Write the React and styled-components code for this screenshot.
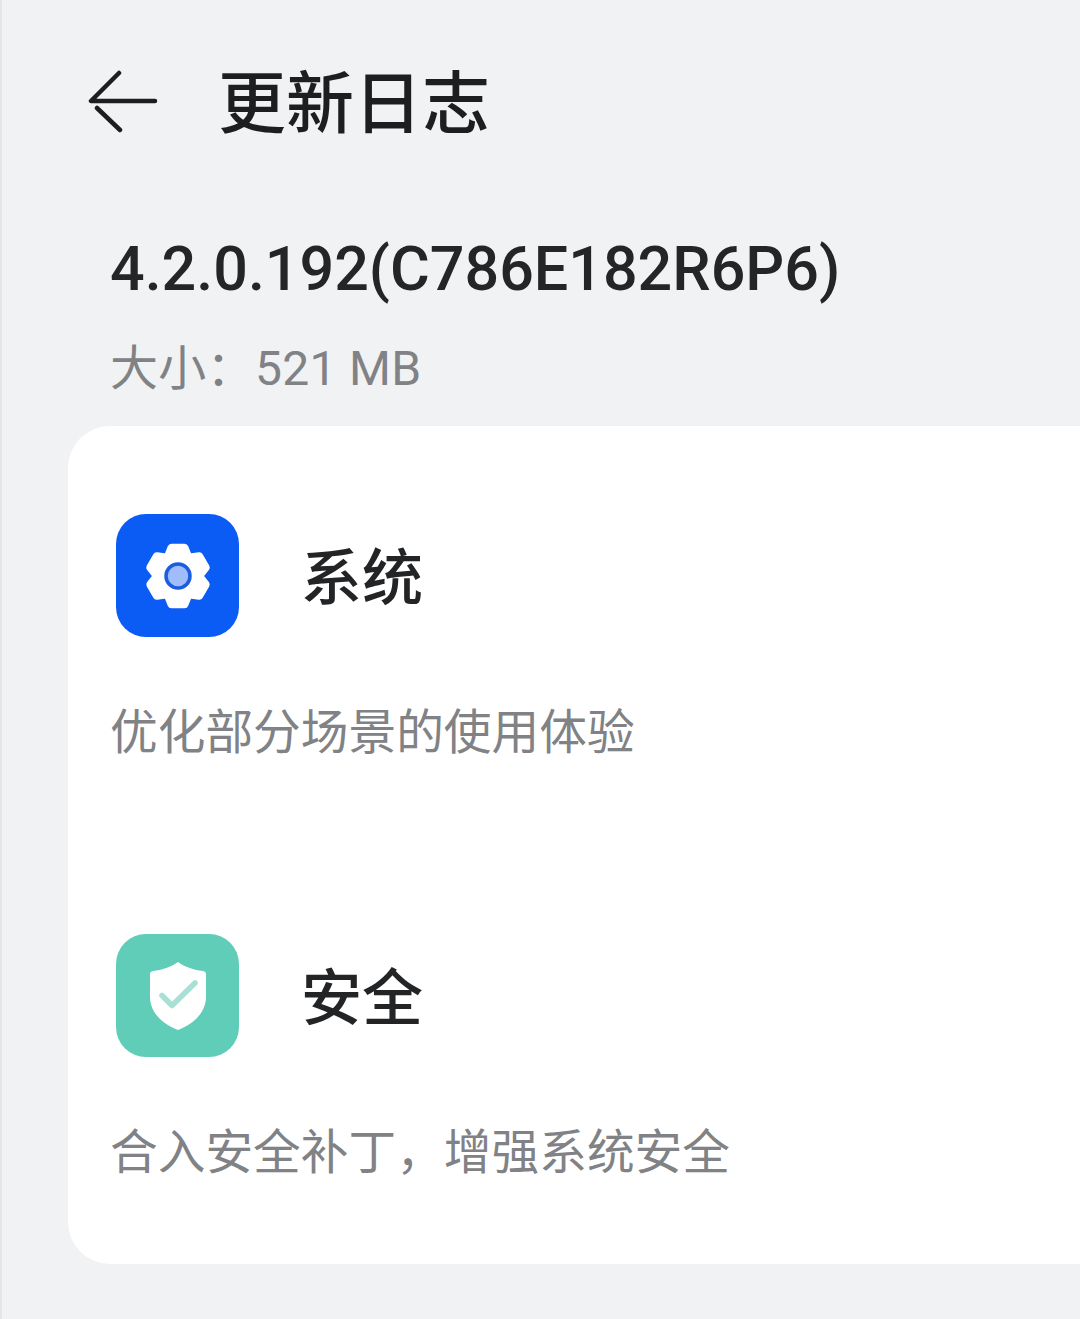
import React from "react";
import styled, { createGlobalStyle } from "styled-components";

const Global = createGlobalStyle`
  html, body { margin: 0; padding: 0; background: #f1f2f4; }
  * { box-sizing: border-box; }
`;
const FONT = `"Noto Sans CJK SC", "Noto Sans", sans-serif`;
const Page = styled.div`
  width: 1080px; height: 1319px; background: #f1f2f4; overflow: hidden;
  font-family: ${FONT}; border-left: 2px solid #e4e5e7;
`;
const Header = styled.header`
  display: flex; align-items: center; height: 204px; padding-left: 86px; gap: 60px;
`;
const Title = styled.h1`
  margin: -6px 0 0; font-size: 68px; font-weight: 500; line-height: 1; color: #1d1e20;
`;
const Version = styled.section`
  padding-left: 108px; height: 222px; display: flex; flex-direction: column;
`;
const VersionName = styled.div`
  font-family: "Roboto", ${FONT}; font-size: 61px; font-weight: 500; color: #242527; line-height: 70px; margin-top: 30px;
`;
const Size = styled.div`
  font-family: "Roboto", ${FONT}; font-size: 48px; font-weight: 400; letter-spacing: 0.3px; color: #808285; line-height: 56px; margin-top: 37px;
`;
const Card = styled.main`
  margin-left: 66px; height: 838px; background: #fff; border-radius: 42px 0 0 42px; padding: 88px 0 0 48px;
`;
const Entry = styled.div` height: 420px; `;
const EntryHead = styled.div` display: flex; align-items: center; gap: 62px; `;
const Tile = styled.div`
  width: 123px; height: 123px; border-radius: 30px; background: ${p => p.$bg};
  display: flex; align-items: center; justify-content: center;
`;
const EntryTitle = styled.div`
  font-size: 61px; font-weight: 500; color: #232426; line-height: 1; margin-top: -5px;
`;
const EntryText = styled.div`
  font-size: 47.7px; color: #808285; line-height: 60px; margin: 62px 0 0 -6px;
`;

const polar = (deg, r) => {
  const t = (deg * Math.PI) / 180;
  return `${(34 + r * Math.sin(t)).toFixed(2)},${(34 - r * Math.cos(t)).toFixed(2)}`;
};
const GEAR_POINTS = [0, 60, 120, 180, 240, 300]
  .flatMap(a => [polar(a - 13, 29), polar(a + 13, 29), polar(a + 30, 21)])
  .join(" ");
const Gear = () => (
  <svg width="68" height="68" viewBox="0 0 68 68">
    <polygon points={GEAR_POINTS} fill="#fff" stroke="#fff" strokeWidth="8" strokeLinejoin="round" />
    <circle cx="34" cy="34" r="12" fill="#a0bcfa" stroke="#1b5ce0" strokeWidth="3.500" />
  </svg>
);
const Shield = () => (
  <svg width="60" height="70" viewBox="0 0 60 70">
    <path fill="#fff" d="M30 1c7 5 16 8 25 9 2 .3 3 1.500 3 3.500V36c0 15-12 27-28 33C14 63 2 51 2 36V13.500c0-2 1-3.200 3-3.500 9-1 18-4 25-9z"/>
    <path fill="none" stroke="#a8e0d4" strokeWidth="5.500" strokeLinecap="round" strokeLinejoin="round" d="M14 34.500l10 10 23-22.500"/>
  </svg>
);
const Back = () => (
  <svg width="70" height="64" viewBox="0 0 70 64" fill="none" stroke="#1d1e20" strokeWidth="4.500" strokeLinecap="round" strokeLinejoin="round">
    <path d="M31 3L3 31h64M9 38l23 22"/>
  </svg>
);

export default function App() {
  return (
    <Page>
      <Global />
      <Header>
        <Back />
        <Title>更新日志</Title>
      </Header>
      <Version>
        <VersionName>4.2.0.192(C786E182R6P6)</VersionName>
        <Size>大小：521 MB</Size>
      </Version>
      <Card>
        <Entry>
          <EntryHead>
            <Tile $bg="#0a5cf5"><Gear /></Tile>
            <EntryTitle>系统</EntryTitle>
          </EntryHead>
          <EntryText>优化部分场景的使用体验</EntryText>
        </Entry>
        <Entry>
          <EntryHead>
            <Tile $bg="#5fcdb8"><Shield /></Tile>
            <EntryTitle>安全</EntryTitle>
          </EntryHead>
          <EntryText>合入安全补丁，增强系统安全</EntryText>
        </Entry>
      </Card>
    </Page>
  );
}
